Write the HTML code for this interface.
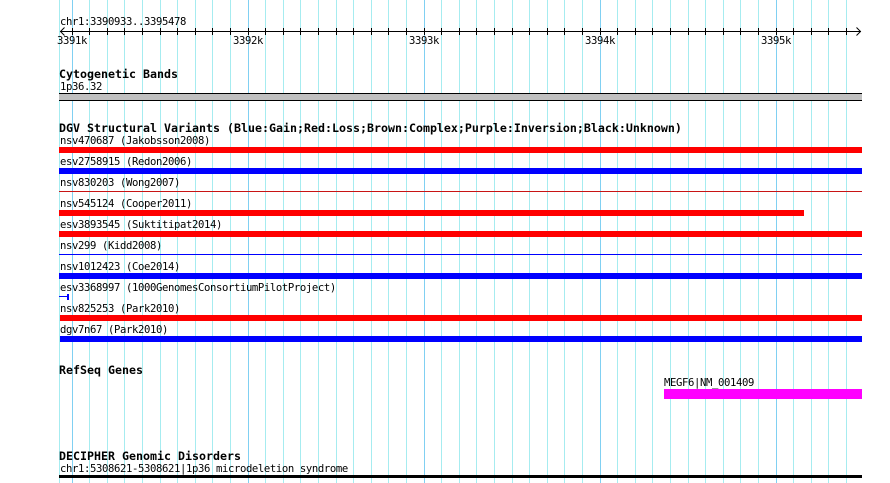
<!DOCTYPE html>
<html>
<head>
<meta charset="utf-8">
<style>
html,body{margin:0;padding:0;background:#fff;}
body{width:890px;height:483px;overflow:hidden;}
svg{display:block;}
text{font-family:"DejaVu Sans Mono","Liberation Mono",monospace;font-size:10.6px;letter-spacing:-.38px;fill:#000;white-space:pre;}
.b{font-weight:bold;font-size:11.63px;letter-spacing:0;}
</style>
</head>
<body>
<svg width="890" height="483" viewBox="0 0 890 483" xmlns="http://www.w3.org/2000/svg">
<rect width="890" height="483" fill="#fff"/>
<g shape-rendering="crispEdges">
<path fill="none" stroke="#a6ecf0" stroke-width="1" d="M59.5 0V483M89.5 0V483M107.5 0V483M124.5 0V483M142.5 0V483M160.5 0V483M177.5 0V483M195.5 0V483M212.5 0V483M230.5 0V483M265.5 0V483M283.5 0V483M300.5 0V483M318.5 0V483M336.5 0V483M353.5 0V483M371.5 0V483M388.5 0V483M406.5 0V483M441.5 0V483M459.5 0V483M476.5 0V483M494.5 0V483M512.5 0V483M529.5 0V483M547.5 0V483M564.5 0V483M582.5 0V483M617.5 0V483M635.5 0V483M652.5 0V483M670.5 0V483M688.5 0V483M705.5 0V483M723.5 0V483M740.5 0V483M758.5 0V483M793.5 0V483M811.5 0V483M828.5 0V483M846.5 0V483"/>
<path fill="none" stroke="#80d0f2" stroke-width="1" d="M72.5 0V483M248.5 0V483M424.5 0V483M600.5 0V483M776.5 0V483"/>
<path fill="none" stroke="#000" stroke-width="1" d="M60 31.5H861M72.5 28V35M89.5 28V35M107.5 28V35M124.5 28V35M142.5 28V35M160.5 28V35M177.5 28V35M195.5 28V35M212.5 28V35M230.5 28V35M248.5 28V35M265.5 28V35M283.5 28V35M300.5 28V35M318.5 28V35M336.5 28V35M353.5 28V35M371.5 28V35M388.5 28V35M406.5 28V35M424.5 28V35M441.5 28V35M459.5 28V35M476.5 28V35M494.5 28V35M512.5 28V35M529.5 28V35M547.5 28V35M564.5 28V35M582.5 28V35M600.5 28V35M617.5 28V35M635.5 28V35M652.5 28V35M670.5 28V35M688.5 28V35M705.5 28V35M723.5 28V35M740.5 28V35M758.5 28V35M776.5 28V35M793.5 28V35M811.5 28V35M828.5 28V35M846.5 28V35"/>
<rect x="59" y="93" width="803" height="8" fill="#000"/>
<rect x="59" y="94" width="803" height="6" fill="#c0c0c0"/>
<rect x="59" y="147" width="803" height="6" fill="#f00"/>
<rect x="59" y="168" width="803" height="6" fill="#00f"/>
<rect x="59" y="191" width="803" height="1" fill="#c81414"/>
<rect x="59" y="210" width="745" height="6" fill="#f00"/>
<rect x="59" y="231" width="803" height="6" fill="#f00"/>
<rect x="59" y="254" width="803" height="1" fill="#00f"/>
<rect x="59" y="273" width="803" height="6" fill="#00f"/>
<rect x="59" y="296" width="8" height="1" fill="#00f"/>
<rect x="67" y="294" width="2" height="6" fill="#00f"/>
<rect x="60" y="315" width="802" height="6" fill="#f00"/>
<rect x="60" y="336" width="802" height="6" fill="#00f"/>
<rect x="664" y="389" width="198" height="10" fill="#f0f"/>
<rect x="59" y="475" width="803" height="3" fill="#000"/>
</g>
<path fill="none" stroke="#000" stroke-width="1" d="M64.5 27.5L60.5 31.5L64.5 35.5M856.5 27.5L860.5 31.5L856.5 35.5"/>
<text x="60" y="25">chr1:3390933..3395478</text>
<text x="57" y="44">3391k</text>
<text x="233" y="44">3392k</text>
<text x="409" y="44">3393k</text>
<text x="585" y="44">3394k</text>
<text x="761" y="44">3395k</text>
<text class="b" x="59" y="78">Cytogenetic Bands</text>
<text x="60" y="90">1p36.32</text>
<text class="b" x="59" y="132">DGV Structural Variants (Blue:Gain;Red:Loss;Brown:Complex;Purple:Inversion;Black:Unknown)</text>
<text x="60" y="144">nsv470687 (Jakobsson2008)</text>
<text x="60" y="165">esv2758915 (Redon2006)</text>
<text x="60" y="186">nsv830203 (Wong2007)</text>
<text x="60" y="207">nsv545124 (Cooper2011)</text>
<text x="60" y="228">esv3893545 (Suktitipat2014)</text>
<text x="60" y="249">nsv299 (Kidd2008)</text>
<text x="60" y="270">nsv1012423 (Coe2014)</text>
<text x="60" y="291">esv3368997 (1000GenomesConsortiumPilotProject)</text>
<text x="60" y="312">nsv825253 (Park2010)</text>
<text x="60" y="333">dgv7n67 (Park2010)</text>
<text class="b" x="59" y="374">RefSeq Genes</text>
<text x="664" y="386">MEGF6|NM_001409</text>
<text class="b" x="59" y="460">DECIPHER Genomic Disorders</text>
<text x="60" y="472">chr1:5308621-5308621|1p36 microdeletion syndrome</text>
</svg>
</body>
</html>
